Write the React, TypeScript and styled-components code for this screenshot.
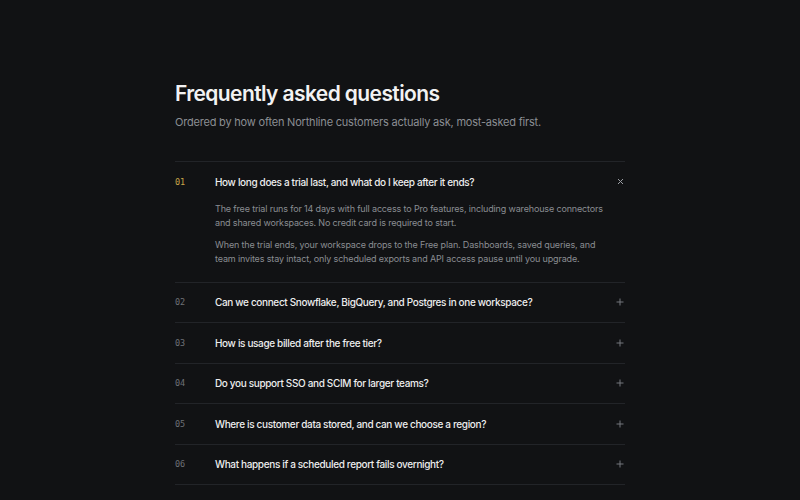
import React, { useState } from "react"
import styled, { createGlobalStyle } from "styled-components"

const GlobalStyle = createGlobalStyle`
  html, body {
    margin: 0;
    background: #111214;
  }
  body {
    font-family: Inter, "Noto Sans", sans-serif;
    -webkit-font-smoothing: antialiased;
  }
`

type Faq = {
  question: string
  answer: string[]
}

const FAQS: Faq[] = [
  {
    question: "How long does a trial last, and what do I keep after it ends?",
    answer: [
      "The free trial runs for 14 days with full access to Pro features, including warehouse connectors and shared workspaces. No credit card is required to start.",
      "When the trial ends, your workspace drops to the Free plan. Dashboards, saved queries, and team invites stay intact, only scheduled exports and API access pause until you upgrade.",
    ],
  },
  {
    question: "Can we connect Snowflake, BigQuery, and Postgres in one workspace?",
    answer: [],
  },
  { question: "How is usage billed after the free tier?", answer: [] },
  { question: "Do you support SSO and SCIM for larger teams?", answer: [] },
  {
    question: "Where is customer data stored, and can we choose a region?",
    answer: [],
  },
  { question: "What happens if a scheduled report fails overnight?", answer: [] },
]

const App: React.FC = () => {
  const [openIndex, setOpenIndex] = useState<number | null>(0)

  return (
    <Page>
      <GlobalStyle />
      <Section>
        <Title>Frequently asked questions</Title>
        <Subtitle>
          Ordered by how often Northline customers actually ask, most-asked first.
        </Subtitle>
        <List>
          {FAQS.map((faq, i) => {
            const isOpen = openIndex === i
            return (
              <Item key={faq.question}>
                <Header onClick={() => setOpenIndex(isOpen ? null : i)}>
                  <Number isOpen={isOpen}>{String(i + 1).padStart(2, "0")}</Number>
                  <Question>{faq.question}</Question>
                  <Toggle>{isOpen ? <CloseIcon /> : <PlusIcon />}</Toggle>
                </Header>
                {isOpen && (
                  <Answer>
                    {faq.answer.map((p) => (
                      <Paragraph key={p}>{p}</Paragraph>
                    ))}
                  </Answer>
                )}
              </Item>
            )
          })}
        </List>
      </Section>
    </Page>
  )
}

const PlusIcon = () => (
  <svg width="8" height="8" viewBox="0 0 8 8">
    <path d="M4 0.5v7M0.5 4h7" stroke="#74777c" strokeWidth="1" />
  </svg>
)

const CloseIcon = () => (
  <svg width="7" height="7" viewBox="0 0 7 7">
    <path d="M1 1l5 5M6 1l-5 5" stroke="#9a9da2" strokeWidth="1" />
  </svg>
)

const Page = styled.div`
  min-height: 500px;
  background: #111214;
`

const Section = styled.div`
  width: 450px;
  margin: 0 auto;
  padding-top: 80px;
`

const Title = styled.h1`
  margin: 0;
  font-size: 21px;
  line-height: 28px;
  font-weight: 600;
  letter-spacing: -0.6px;
  color: #f2f2f3;
`

const Subtitle = styled.p`
  margin: 6px 0 0;
  font-size: 11px;
  line-height: 16px;
  letter-spacing: -0.2px;
  color: #8b8e93;
`

const List = styled.div`
  margin-top: 31px;
  border-top: 1px solid #222428;
`

const Item = styled.div`
  border-bottom: 1px solid #222428;
`

const Header = styled.div`
  display: flex;
  align-items: center;
  height: 39.5px;
  cursor: pointer;
`

const Number = styled.span<{ isOpen: boolean }>`
  width: 40px;
  flex-shrink: 0;
  font-family: "DejaVu Sans Mono", "Liberation Mono", monospace;
  font-size: 8.5px;
  color: ${(p) => (p.isOpen ? "#c9a54a" : "#6e7176")};
`

const Question = styled.span`
  flex: 1;
  font-size: 10px;
  font-weight: 500;
  letter-spacing: -0.35px;
  color: #ededee;
`

const Toggle = styled.span`
  width: 10px;
  display: flex;
  align-items: center;
  justify-content: center;
`

const Answer = styled.div`
  width: 392px;
  padding: 0 0 15px 40px;
`

const Paragraph = styled.p`
  margin: 0;
  font-size: 9px;
  line-height: 14.5px;
  letter-spacing: -0.15px;
  color: #8a8d92;
  & + & {
    margin-top: 7px;
  }
`

export default App
